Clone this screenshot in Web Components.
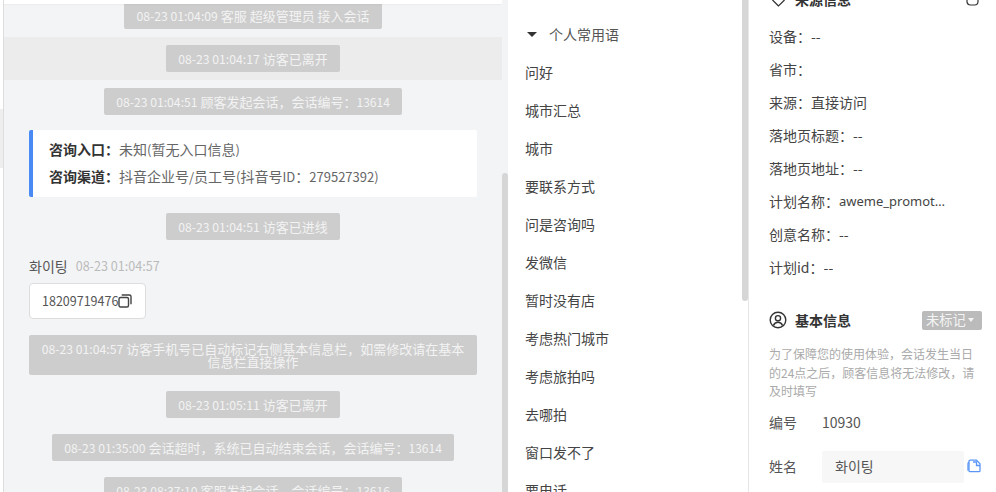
<!DOCTYPE html>
<html lang="zh">
<head>
<meta charset="utf-8">
<title>会话</title>
<style>
html, body { margin: 0; height: 100%; overflow: hidden; background: #fff; }
body { font: 14px/1.5 "Noto Sans CJK SC", "Noto Sans CJK KR", "Noto Sans", sans-serif; color: #444; }
</style>
</head>
<body>
<session-page>
  <chat-panel>
    <sys-bubble first time="08-23 01:04:09">客服 超级管理员 接入会话</sys-bubble>
    <sys-bubble active time="08-23 01:04:17">访客已离开</sys-bubble>
    <sys-bubble time="08-23 01:04:51">顾客发起会话，会话编号：<small>13614</small></sys-bubble>
    <source-card></source-card>
    <sys-bubble time="08-23 01:04:51">访客已进线</sys-bubble>
    <visitor-msg name="화이팅" time="08-23 01:04:57" phone="18209719476"></visitor-msg>
    <sys-bubble wide time="08-23 01:04:57">访客手机号已自动标记右侧基本信息栏，如需修改请在基本信息栏直接操作</sys-bubble>
    <sys-bubble time="08-23 01:05:11">访客已离开</sys-bubble>
    <sys-bubble time="08-23 01:35:00">会话超时，系统已自动结束会话，会话编号：<small>13614</small></sys-bubble>
    <sys-bubble time="08-23 08:37:10">客服发起会话，会话编号：<small>13616</small></sys-bubble>
  </chat-panel>
  <phrase-panel title="个人常用语">
    <phrase-item>问好</phrase-item>
    <phrase-item>城市汇总</phrase-item>
    <phrase-item>城市</phrase-item>
    <phrase-item>要联系方式</phrase-item>
    <phrase-item>问是咨询吗</phrase-item>
    <phrase-item>发微信</phrase-item>
    <phrase-item>暂时没有店</phrase-item>
    <phrase-item>考虑热门城市</phrase-item>
    <phrase-item>考虑旅拍吗</phrase-item>
    <phrase-item>去哪拍</phrase-item>
    <phrase-item>窗口发不了</phrase-item>
    <phrase-item>要电话</phrase-item>
  </phrase-panel>
  <info-panel>
    <info-row label="设备：">--</info-row>
    <info-row label="省市："></info-row>
    <info-row label="来源：">直接访问</info-row>
    <info-row label="落地页标题：">--</info-row>
    <info-row label="落地页地址：">--</info-row>
    <info-row label="计划名称：" latin>aweme_promotion_plan</info-row>
    <info-row label="创意名称：">--</info-row>
    <info-row label="计划id：">--</info-row>
  </info-panel>
</session-page>
<script>
class SessionPage extends HTMLElement {
  constructor() {
    super();
    this.attachShadow({ mode: "open" }).innerHTML = `
    <style>
    :host { display: flex; height: 492px; width: 996px; overflow: hidden; }
    </style>
    <slot></slot>`;
  }
}

class ChatPanel extends HTMLElement {
  constructor() {
    super();
    this.attachShadow({ mode: "open" }).innerHTML = `
    <style>
    :host { display: flex; flex: 0 0 509px; height: 492px; box-sizing: border-box; padding-right: 1px; position: relative; }
    .edge { flex: 0 0 3px; box-sizing: border-box; padding-top: 109px; }
    .edge i { display: block; height: 59px; background: #eee; }
    .main { flex: 1; min-width: 0; background: #f3f4f6; border-left: 1px solid #ddd; overflow: hidden; position: relative; }
    .top { position: absolute; z-index: 1; left: 0; right: 0; top: 0; height: 4px; background: #fff; box-shadow: 0 1px 2px rgba(0,0,0,.04); }
    .list { margin-top: 2px; }
    .bar { flex: 0 0 6px; background: #f3f4f6; padding-top: 173px; box-sizing: border-box; }
    .bar i { display: block; height: 319px; background: #d6d6d6; border-radius: 3px 3px 0 0; }
    </style>
    <div class="edge"><i></i></div>
    <div class="main"><div class="top"></div><div class="list"><slot></slot></div></div>
    <div class="bar"><i></i></div>`;
  }
}

class SysBubble extends HTMLElement {
  constructor() {
    super();
    const time = this.getAttribute("time");
    this.attachShadow({ mode: "open" }).innerHTML = `
    <style>
    :host { display: block; padding: 8px 25px; text-align: center; font-size: 13px; }
    :host([active]) { background: #ececec; }
    :host([first]) { padding-top: 0; }
    span { display: inline-block; box-sizing: border-box; min-height: 27px; padding: 5px 12px; line-height: 17px; background: #cdcdcd; color: #f3f3f3; border-radius: 2px; }
    :host([wide]) span { display: block; line-height: 13px; padding: 7px 12px; }
    time { font-size: 12.200px; line-height: 1; }
    ::slotted(small) { font-size: 12px; line-height: 1; }
    </style>
    <span><time>${time}</time> <slot></slot></span>`;
  }
}

class SourceCard extends HTMLElement {
  constructor() {
    super();
    this.attachShadow({ mode: "open" }).innerHTML = `
    <style>
    :host { display: block; margin: 7px 25px 8px; box-sizing: border-box; height: 67px; padding: 6px 16px; background: #fff; border-left: 4px solid #4a8af4; border-radius: 2px; font-size: 14px; line-height: 27px; color: #666; }
    b { font-weight: 700; color: #333; }
    i { font-style: normal; font-size: 13px; line-height: 1; }
    </style>
    <div><b>咨询入口：</b>未知<i>(</i>暂无入口信息<i>)</i></div>
    <div><b>咨询渠道：</b>抖音企业号<i>/</i>员工号<i>(</i>抖音号<i>ID</i>：<i>279527392)</i></div>`;
  }
}

class VisitorMsg extends HTMLElement {
  constructor() {
    super();
    const name = this.getAttribute("name");
    const time = this.getAttribute("time");
    const phone = this.getAttribute("phone");
    this.attachShadow({ mode: "open" }).innerHTML = `
    <style>
    :host { display: block; padding: 8px 25px 8px; }
    .head { display: flex; align-items: center; gap: 8px; height: 20px; font-size: 14px; color: #555; }
    .time { font-size: 12.600px; color: #bbb; }
    .box { display: inline-flex; align-items: center; box-sizing: border-box; height: 36px; width: 117px; margin-top: 7px; padding: 0 12px; background: #fff; border: 1px solid #ddd; border-radius: 4px; font-size: 12.500px; color: #555; }
    svg { flex: none; }
    </style>
    <div class="head"><span>${name}</span><span class="time">${time}</span></div>
    <div class="box">${phone}<svg width="14" height="14" viewBox="0 0 14 14" fill="none" stroke="#444" stroke-width="1.400"><rect x="1" y="3.500" width="9.500" height="9.500" rx="1.500"/><path d="M3.700 1h7.800A1.500 1.500 0 0 1 13 2.500v7.800"/></svg></div>`;
  }
}

class PhrasePanel extends HTMLElement {
  constructor() {
    super();
    const title = this.getAttribute("title");
    this.attachShadow({ mode: "open" }).innerHTML = `
    <style>
    :host { display: flex; flex-direction: column; flex: 0 0 233px; height: 492px; box-sizing: border-box; padding: 15px 0 0 16px; background: #fff; overflow: hidden; }
    .head { display: flex; flex: none; align-items: center; height: 38px; padding-left: 2px; gap: 12px; color: #555; }
    .caret { width: 0; height: 0; border: 5px solid transparent; border-top: 5px solid #333; border-bottom: 0; }
    </style>
    <div class="head"><i class="caret"></i><span>${title}</span></div>
    <slot></slot>`;
  }
}

class PhraseItem extends HTMLElement {
  constructor() {
    super();
    this.attachShadow({ mode: "open" }).innerHTML = `
    <style>
    :host { display: flex; flex: none; align-items: center; height: 38px; color: #444; }
    </style>
    <slot></slot>`;
  }
}

class InfoPanel extends HTMLElement {
  constructor() {
    super();
    this.attachShadow({ mode: "open" }).innerHTML = `
    <style>
    :host { display: flex; flex: 0 0 254px; height: 492px; overflow: hidden; background: #fff; }
    .bar { flex: 0 0 6px; padding-bottom: 191px; box-sizing: border-box; height: 492px; }
    .bar i { display: block; height: 100%; background: #d6d6d6; border-radius: 0 0 3px 3px; }
    .body { flex: 1; min-width: 0; border-left: 1px solid #e6e6e6; padding: 0 14px 0 20px; margin-top: -13px; }
    .title { display: flex; align-items: center; gap: 8px; height: 24px; font-weight: 700; color: #333; }
    .title .end { margin-left: auto; margin-right: 3px; }
    .head svg:first-child { margin-left: 3px; margin-right: 2px; }
    .rows { padding-top: 9px; }
    .basic { margin-top: 24px; }
    .tag { margin-left: auto; display: flex; align-items: center; gap: 2px; box-sizing: border-box; width: 60px; height: 19px; padding-left: 4px; background: #bbb; color: #f4f4f4; font-weight: 400; font-size: 13.300px; border-radius: 2px; }
    .tag i { width: 0; height: 0; border: 3.500px solid transparent; border-top: 4px solid #f4f4f4; border-bottom: 0; }
    .tip { margin: 13px 0 0; font-size: 12px; line-height: 18.500px; color: #aaa; }
    .field { display: flex; align-items: center; color: #555; }
    .field span { flex: 0 0 53px; }
    .no { margin-top: 11px; height: 22px; }
    .name { margin-top: 17px; height: 32px; }
    .input { flex: 0 0 142px; box-sizing: border-box; height: 32px; line-height: 30px; padding-left: 13px; background: #f7f7f7; border-radius: 2px; }
    .name svg { margin-left: 3px; margin-top: -1px; }
    </style>
    <div class="bar"><i></i></div>
    <div class="body">
      <div class="title head">
        <svg width="13" height="15" viewBox="0 0 13 15" fill="none" stroke="#333" stroke-width="1.200"><path d="M6.500 14 1 8.500A3.600 3.600 0 0 1 1 3.500a3.800 3.800 0 0 1 5.500 0 3.800 3.800 0 0 1 5.500 0 3.600 3.600 0 0 1 0 5z"/></svg>
        来源信息
        <svg class="end" width="13" height="14" viewBox="0 0 13 14" fill="none" stroke="#333" stroke-width="1.200"><rect x="1" y="1" width="11" height="12" rx="3.500"/></svg>
      </div>
      <div class="rows"><slot></slot></div>
      <div class="title basic">
        <svg width="18" height="18" viewBox="0 0 18 18" fill="none" stroke="#333" stroke-width="1.400"><circle cx="9" cy="9" r="7.800"/><circle cx="9" cy="7.200" r="2.600"/><path d="M4.500 14.500c.8-2.300 2.400-3.200 4.500-3.200s3.700.9 4.500 3.200"/></svg>
        基本信息
        <div class="tag">未标记<i></i></div>
      </div>
      <p class="tip">为了保障您的使用体验，会话发生当日的24点之后，顾客信息将无法修改，请及时填写</p>
      <div class="field no"><span>编号</span>10930</div>
      <div class="field name"><span>姓名</span><div class="input">화이팅</div>
        <svg width="14" height="14" viewBox="0 0 14 14" fill="none" stroke="#5b96f7" stroke-width="1.300"><path d="M3 1.200h6.500l3.500 3.500v7a1 1 0 0 1-1 1H3a1 1 0 0 1-1-1v-9.500a1 1 0 0 1 1-1z"/><path d="M6 3h3.500v3.500H13"/><path d="M2 3.500A1.200 1.200 0 0 0 1 4.700v7"/></svg>
      </div>
    </div>`;
  }
}

class InfoRow extends HTMLElement {
  constructor() {
    super();
    const label = this.getAttribute("label");
    this.attachShadow({ mode: "open" }).innerHTML = `
    <style>
    :host { display: flex; align-items: center; height: 33px; color: #444; }
    .val { max-width: 107px; overflow: hidden; text-overflow: ellipsis; white-space: nowrap; }
    :host([latin]) .val { font-family: "Noto Sans", sans-serif; font-size: 13px; }
    </style>
    <span>${label}</span><span class="val"><slot></slot></span>`;
  }
}

customElements.define("session-page", SessionPage);
customElements.define("chat-panel", ChatPanel);
customElements.define("sys-bubble", SysBubble);
customElements.define("source-card", SourceCard);
customElements.define("visitor-msg", VisitorMsg);
customElements.define("phrase-panel", PhrasePanel);
customElements.define("phrase-item", PhraseItem);
customElements.define("info-panel", InfoPanel);
customElements.define("info-row", InfoRow);
</script>
</body>
</html>
